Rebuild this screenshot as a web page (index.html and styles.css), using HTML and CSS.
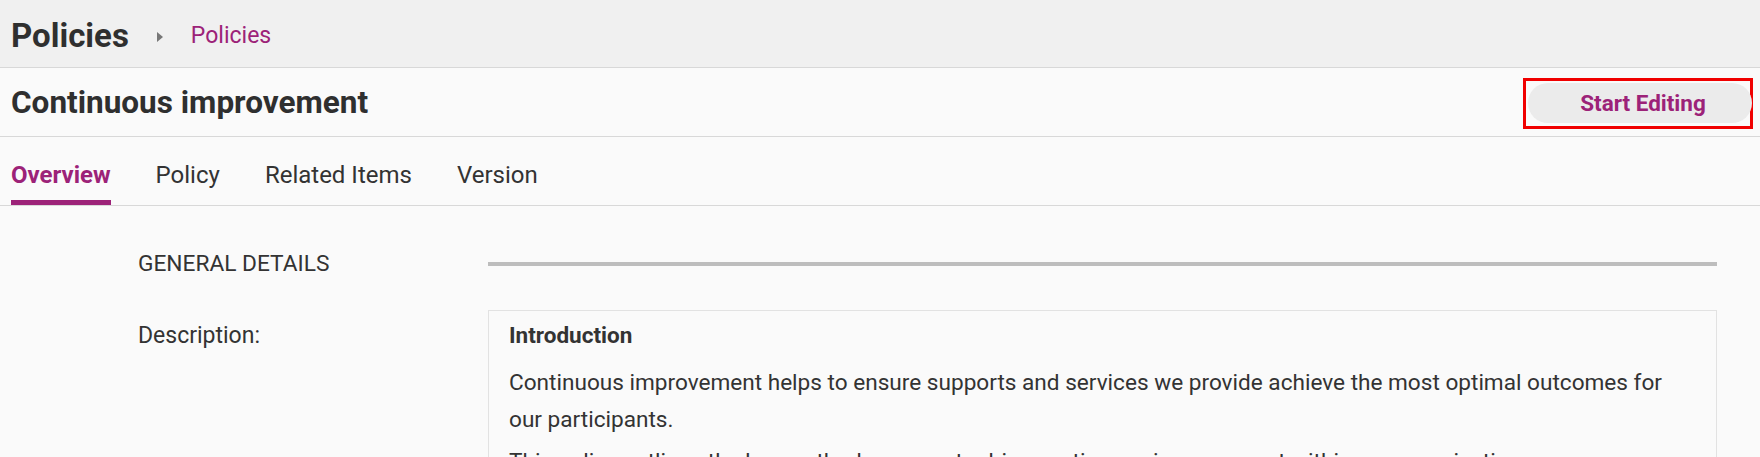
FILE: index.html
```html
<!DOCTYPE html>
<html lang="en">
<head>
    <meta charset="UTF-8">
    <meta name="viewport" content="width=device-width, initial-scale=1.0">
    <title>Continuous improvement - Policies</title>
    <link rel="stylesheet" href="styles.css">
</head>
<body>
    <header class="page-header">
        <h1 class="page-title">Policies</h1>
        <span class="crumb-arrow"></span>
        <a class="crumb-link" href="#">Policies</a>
    </header>

    <div class="title-bar">
        <h2 class="record-title">Continuous improvement</h2>
        <div class="highlight">
            <button class="edit-btn" type="button">Start Editing</button>
        </div>
    </div>

    <nav class="tabs">
        <a class="tab active" href="#">Overview</a>
        <a class="tab" href="#">Policy</a>
        <a class="tab" href="#">Related Items</a>
        <a class="tab" href="#">Version</a>
    </nav>

    <main class="content">
        <div class="section-head">
            <div class="section-name">GENERAL DETAILS</div>
            <div class="section-rule"></div>
        </div>

        <div class="field">
            <div class="field-label">Description:</div>
            <div class="field-box">
                <h3>Introduction</h3>
                <p>Continuous improvement helps to ensure supports and services we provide achieve the most optimal outcomes for our participants.</p>
                <p>This policy outlines the key methods we use to drive continuous improvement within our organisation.</p>
            </div>
        </div>
    </main>
</body>
</html>
```

FILE: styles.css
```css
body {
    font-family: Roboto, 'Liberation Sans', sans-serif;
    background: #fafafa;
    color: #333;
    margin: 0;
    padding: 0;
}
.page-header {
    display: flex;
    align-items: center;
    height: 63px;
    padding: 4px 11px 0;
    background: #f0f0f0;
    border-bottom: 1px solid #d8d8d8;
}
.page-title {
    margin: 0;
    font-size: 33px;
    font-weight: 700;
    color: #2f2f2f;
}
.crumb-arrow {
    width: 0;
    height: 0;
    border-top: 5px solid transparent;
    border-bottom: 5px solid transparent;
    border-left: 6px solid #777;
    margin: 2px 28px 0 28px;
}
.crumb-link {
    font-size: 23px;
    color: #9c2278;
    text-decoration: none;
}
.title-bar {
    display: flex;
    align-items: center;
    justify-content: space-between;
    height: 67px;
    padding: 1px 7px 0 11px;
    border-bottom: 1px solid #d8d8d8;
}
.record-title {
    margin: 0;
    font-size: 31.5px;
    font-weight: 700;
    color: #2f2f2f;
}
.highlight {
    display: flex;
    border: 3px solid #f00000;
    padding: 2px 0 3px 2px;
    margin-top: 1px;
}
.edit-btn {
    width: 224px;
    height: 40px;
    margin-right: -2px;
    padding: 0 0 0 6px;
    border: none;
    border-radius: 20px;
    background: #ebebeb;
    color: #9c2278;
    font-family: inherit;
    font-size: 22.5px;
    font-weight: 700;
    cursor: pointer;
}
.tabs {
    display: flex;
    gap: 45px;
    padding: 0 11px;
    border-bottom: 1px solid #d8d8d8;
}
.tab {
    padding: 26px 0 13px;
    line-height: 24px;
    font-size: 24px;
    color: #333;
    text-decoration: none;
    border-bottom: 5px solid transparent;
}
.tab.active {
    color: #9c2278;
    font-weight: 700;
    border-bottom-color: #9c2278;
}
.content {
    padding: 44px 43px 0 138px;
}
.section-head {
    display: grid;
    grid-template-columns: 350px 1fr;
    align-items: center;
    height: 24px;
}
.section-name {
    font-size: 22.7px;
}
.section-rule {
    height: 4px;
    background: #bdbdbd;
}
.field {
    display: grid;
    grid-template-columns: 350px 1fr;
    margin-top: 36px;
}
.field-label {
    padding-top: 7px;
    font-size: 23px;
    line-height: 37px;
}
.field-box {
    border: 1px solid #e2e2e2;
    padding: 6px 40px 0 20px;
    font-size: 22.6px;
    line-height: 37px;
}
.field-box h3 {
    margin: 0 0 10px;
    font-size: 22.5px;
    font-weight: 700;
}
.field-box p {
    margin: 0 0 5px;
}
```
